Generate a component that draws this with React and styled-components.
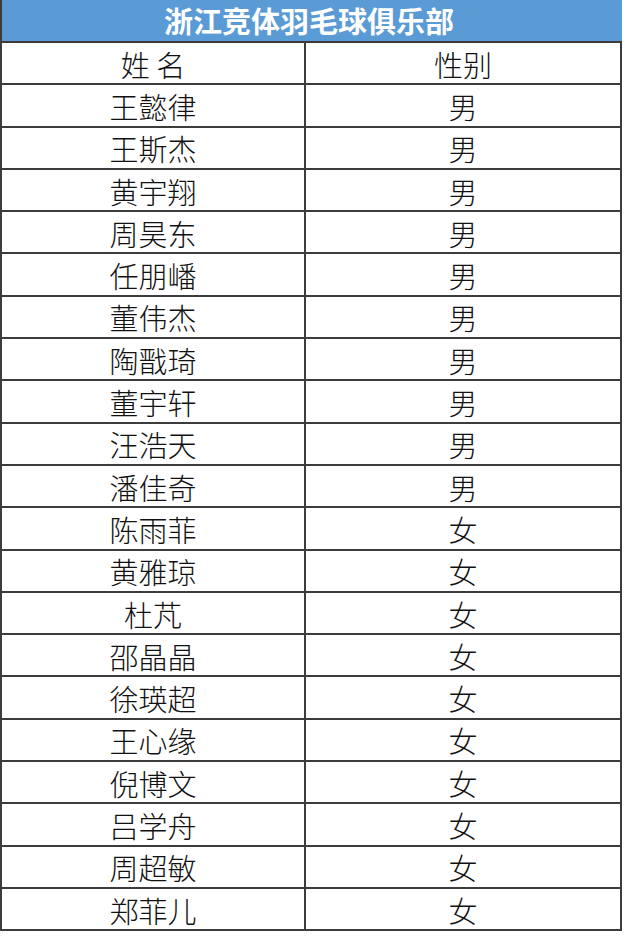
import React from "react";
import styled, { createGlobalStyle } from "styled-components";

const Global = createGlobalStyle`
  html, body { margin: 0; padding: 0; background: #ffffff; }
  body { font-family: "Noto Sans CJK SC", "Noto Sans", sans-serif; }
`;

const Sheet = styled.div`
  width: 622px;
  display: flex;
  flex-direction: column;
`;

const Title = styled.div`
  height: 43px;
  box-sizing: border-box;
  background: #5b9bd5;
  border-left: 2px solid #3c3c3c;
  border-bottom: 2px solid #3c3c3c;
  color: #ffffff;
  font-weight: 700;
  font-size: 29px;
  line-height: 1;
  display: flex;
  align-items: center;
  justify-content: center;
  padding: 0 6px 0 0;
`;

const Grid = styled.div`
  display: grid;
  grid-template-columns: 302px 314px;
  grid-auto-rows: 40.3px;
  gap: 2px;
  padding: 0 2px 2px 2px;
  background: #3c3c3c;
`;

const Cell = styled.div`
  background: #ffffff;
  display: flex;
  align-items: center;
  justify-content: center;
  font-size: 29px;
  font-weight: 300;
  color: #111111;
  line-height: 1;
  padding-top: 2px;
`;

const rows = [
  ["王懿律", "男"],
  ["王斯杰", "男"],
  ["黄宇翔", "男"],
  ["周昊东", "男"],
  ["任朋嶓", "男"],
  ["董伟杰", "男"],
  ["陶戬琦", "男"],
  ["董宇轩", "男"],
  ["汪浩天", "男"],
  ["潘佳奇", "男"],
  ["陈雨菲", "女"],
  ["黄雅琼", "女"],
  ["杜芃", "女"],
  ["邵晶晶", "女"],
  ["徐瑛超", "女"],
  ["王心缘", "女"],
  ["倪博文", "女"],
  ["吕学舟", "女"],
  ["周超敏", "女"],
  ["郑菲儿", "女"],
];

export default function App() {
  return (
    <>
      <Global />
      <Sheet>
        <Title>浙江竞体羽毛球俱乐部</Title>
        <Grid>
          <Cell>姓 名</Cell>
          <Cell>性别</Cell>
          {rows.map(([n, g]) => (
            <React.Fragment key={n}>
              <Cell>{n}</Cell>
              <Cell>{g}</Cell>
            </React.Fragment>
          ))}
        </Grid>
      </Sheet>
    </>
  );
}
